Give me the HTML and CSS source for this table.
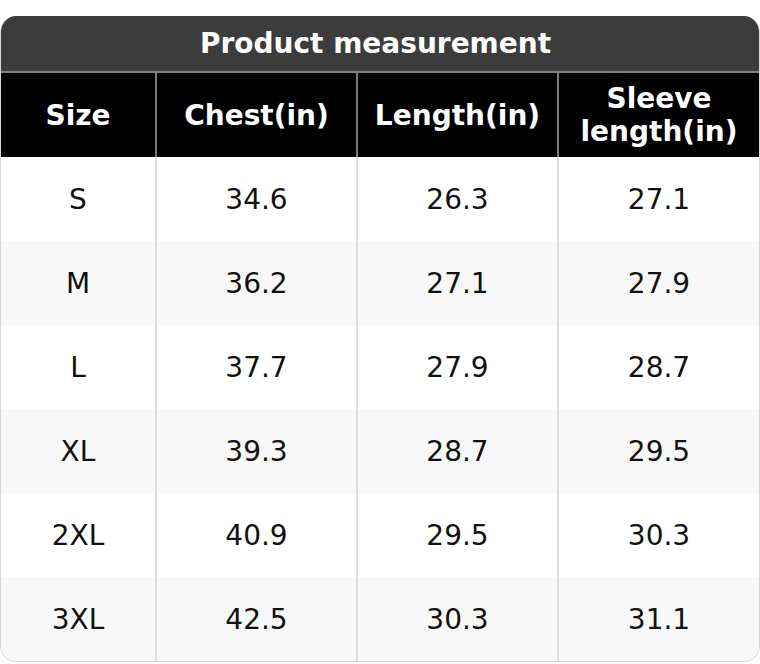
FILE: index.html
```html
<!DOCTYPE html>
<html>
<head>
<meta charset="utf-8">
<link rel="stylesheet" href="styles.css">
</head>
<body>
<div class="card">
  <div class="title">Product measurement</div>
  <table class="tbl">
    <colgroup>
      <col class="c1"><col class="c2"><col class="c2"><col class="c2">
    </colgroup>
    <thead>
      <tr><th>Size</th><th>Chest(in)</th><th>Length(in)</th><th>Sleeve<br>length(in)</th></tr>
    </thead>
    <tbody>
      <tr><td>S</td><td>34.6</td><td>26.3</td><td>27.1</td></tr>
      <tr><td>M</td><td>36.2</td><td>27.1</td><td>27.9</td></tr>
      <tr><td>L</td><td>37.7</td><td>27.9</td><td>28.7</td></tr>
      <tr><td>XL</td><td>39.3</td><td>28.7</td><td>29.5</td></tr>
      <tr><td>2XL</td><td>40.9</td><td>29.5</td><td>30.3</td></tr>
      <tr><td>3XL</td><td>42.5</td><td>30.3</td><td>31.1</td></tr>
    </tbody>
  </table>
</div>
</body>
</html>
```
FILE: styles.css
```css
html, body { margin: 0; padding: 0; background: #fff; }
body { padding-top: 16px; font-family: "DejaVu Sans", sans-serif; }
.card {
  width: 760px;
  box-sizing: border-box;
  border: 1px solid #d8d8d8;
  border-top: none;
  border-radius: 16px;
  overflow: hidden;
}
.title {
  background: #3c3c3c;
  color: #fff;
  font-weight: bold;
  font-size: 28px;
  height: 57px;
  line-height: 55px;
  padding-right: 9px;
  text-align: center;
  border-bottom: 2px solid #808080;
  box-sizing: border-box;
}
.tbl { width: 100%; border-collapse: collapse; table-layout: fixed; }
.c1 { width: 155px; }
.tbl th {
  background: #000;
  color: #fff;
  font-weight: bold;
  font-size: 28px;
  line-height: 33px;
  height: 84px;
  padding: 0;
  border-left: 2px solid #7a7a7a;
  text-align: center;
  vertical-align: middle;
}
.tbl td {
  font-size: 28px;
  color: #111;
  height: 84px;
  padding: 0;
  text-align: center;
  vertical-align: middle;
  border-left: 2px solid #dcdcdc;
}
.tbl th:first-child, .tbl td:first-child { border-left: none; }
.tbl tbody tr:nth-child(even) td { background: #f8f8f8; }
```
